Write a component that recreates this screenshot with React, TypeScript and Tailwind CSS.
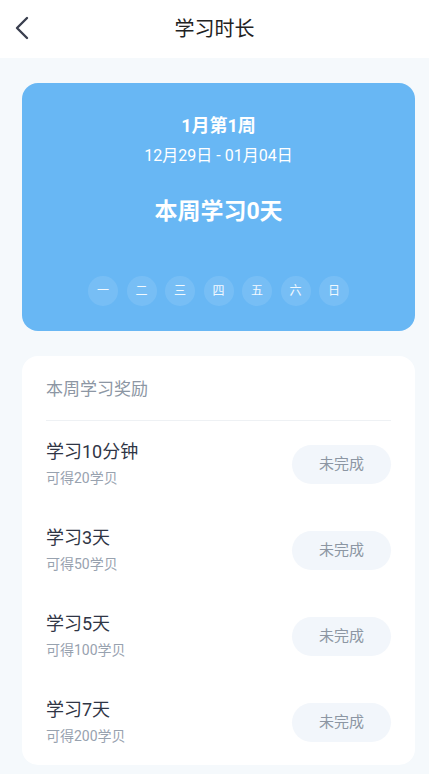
const days = ["一", "二", "三", "四", "五", "六", "日"];

const rewards = [
  { title: "学习10分钟", sub: "可得20学贝" },
  { title: "学习3天", sub: "可得50学贝" },
  { title: "学习5天", sub: "可得100学贝" },
  { title: "学习7天", sub: "可得200学贝" },
];

export default function App() {
  return (
    <div
      className="min-h-[774px] w-[429px] bg-[#f5f9fc]"
      style={{ fontFamily: 'Roboto, "Noto Sans CJK SC", "Noto Sans", sans-serif' }}
    >
      {/* header */}
      <div className="relative flex h-[58px] items-center justify-center bg-white">
        <button className="absolute left-[12px] top-[15px] flex h-[26px] w-[20px] items-center justify-center">
          <svg width="16" height="24" viewBox="0 0 16 24" fill="none">
            <path d="M13 2 L3 12 L13 22" stroke="#3a3f4f" strokeWidth="2.4" strokeLinecap="round" strokeLinejoin="round" />
          </svg>
        </button>
        <h1 className="text-[20px] leading-[28px] text-[#222222]">学习时长</h1>
      </div>

      <div className="pl-[22px] pr-[14px] pt-[25px] pb-[9px]">
        {/* week card */}
        <div className="flex flex-col items-center rounded-[16px] bg-[#68b7f4] pt-[30px] pb-[25px] text-white">
          <div className="text-[18px] font-bold leading-[25px]">1月第1周</div>
          <div className="mt-[7px] text-[16px] leading-[22px]">12月29日 - 01月04日</div>
          <div className="mt-[29px] text-[23px] font-bold leading-[32px]">本周学习0天</div>
          <div className="mt-[48px] flex gap-[8.5px]">
            {days.map((d) => (
              <div
                key={d}
                className="flex h-[30px] w-[30px] items-center justify-center rounded-full bg-white/10 text-[12px] text-white/90"
              >
                {d}
              </div>
            ))}
          </div>
        </div>

        {/* rewards card */}
        <div className="mt-[25px] rounded-[16px] bg-white px-[24px] pt-[21px]">
          <div className="pb-[19px] text-[17px] leading-[24px] text-[#8c96a3]">本周学习奖励</div>
          <div className="h-px bg-[#eef1f4]" />
          {rewards.map((r) => (
            <div key={r.title} className="flex h-[86px] items-center justify-between">
              <div className="flex flex-col gap-[4px]">
                <div className="text-[18px] leading-[24px] text-[#2f3545]">{r.title}</div>
                <div className="text-[14px] leading-[20px] text-[#98a2af]">{r.sub}</div>
              </div>
              <div className="flex h-[39px] w-[99px] items-center justify-center rounded-full bg-[#f2f6fb] text-[15px] text-[#8c96a3]">
                未完成
              </div>
            </div>
          ))}
        </div>
      </div>
    </div>
  );
}
